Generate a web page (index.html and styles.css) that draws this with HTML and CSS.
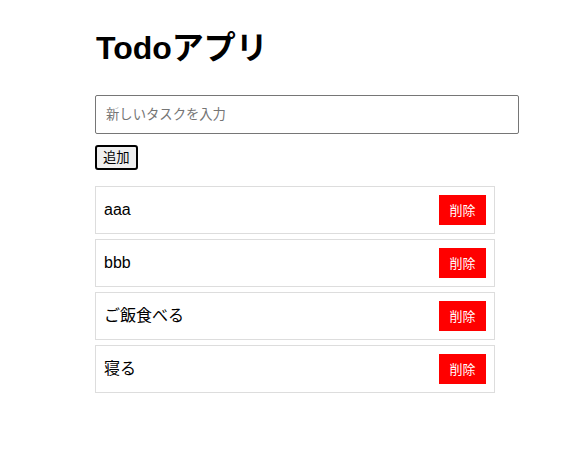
FILE: index.html
```html
<!DOCTYPE html>
<html lang="ja">
<head>
  <meta charset="UTF-8">
  <title>Todoアプリ</title>
  <meta name="viewport" content="width=device-width, initial-scale=1.0">
  <link rel="stylesheet" href="styles.css">
</head>
<body>
  <div class="app">
    <h1>Todoアプリ</h1>
    <input type="text" class="task-input" placeholder="新しいタスクを入力">
    <button class="add-btn">追加</button>
    <ul class="todo-list">
      <li class="todo-item"><span>aaa</span><button class="delete-btn">削除</button></li>
      <li class="todo-item"><span>bbb</span><button class="delete-btn">削除</button></li>
      <li class="todo-item"><span>ご飯食べる</span><button class="delete-btn">削除</button></li>
      <li class="todo-item"><span>寝る</span><button class="delete-btn">削除</button></li>
    </ul>
  </div>
</body>
</html>
```

FILE: styles.css
```css
* {
  box-sizing: border-box;
}
body {
  margin: 0;
  background: #fff;
  color: #000;
  font-family: "Liberation Sans", "Noto Sans CJK JP", sans-serif;
}
.app {
  width: 424px;
  margin-left: 95px;
  padding-top: 28px;
}
h1 {
  margin: 0 0 27px 1px;
  font-size: 32px;
  line-height: 40px;
  font-weight: bold;
}
.task-input {
  display: block;
  width: 424px;
  height: 39px;
  padding: 0 10px;
  border: 1px solid #767676;
  border-radius: 2px;
  font-family: inherit;
  font-size: 13.33px;
  line-height: 16px;
  outline: none;
}
.task-input::placeholder {
  color: #757575;
}
.add-btn {
  display: block;
  margin-top: 11px;
  height: 25px;
  padding: 0 6px;
  border: 2px solid #000;
  border-radius: 3px;
  background: #efefef;
  font-family: inherit;
  font-size: 13.33px;
  line-height: 16px;
  color: #000;
}
.todo-list {
  list-style: none;
  margin: 16px 0 0;
  padding: 0;
  width: 400px;
}
.todo-item {
  display: flex;
  justify-content: space-between;
  align-items: center;
  height: 48px;
  padding: 0 8px;
  margin-bottom: 5px;
  border: 1px solid #ddd;
  font-size: 16px;
  line-height: 18px;
}
.delete-btn {
  width: 47px;
  height: 30px;
  padding: 0;
  border: none;
  background: #ff0000;
  color: #fff;
  font-family: inherit;
  font-size: 13px;
  line-height: 15px;
}
```
